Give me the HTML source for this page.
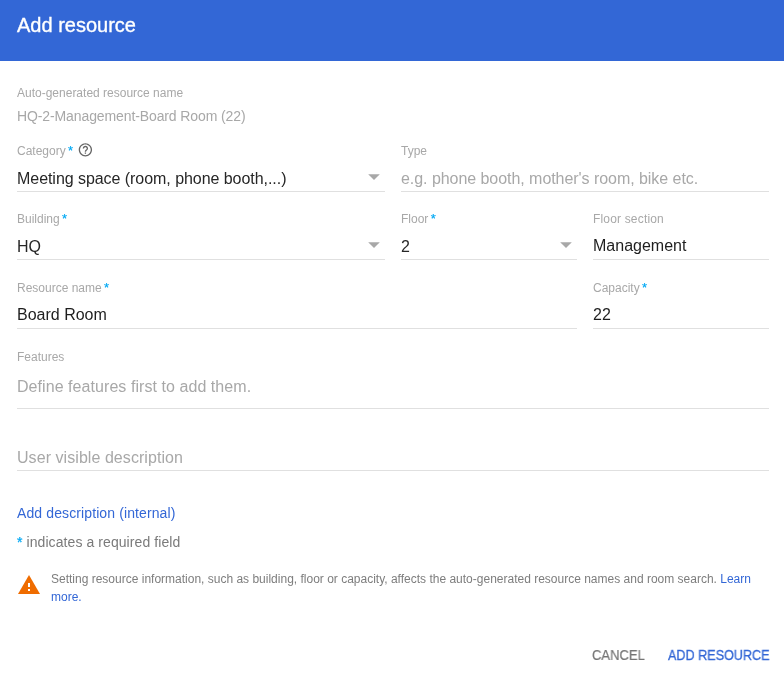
<!DOCTYPE html>
<html><head><meta charset="utf-8">
<style>
html,body{margin:0;padding:0;background:#fff;width:784px;height:677px;overflow:hidden;position:relative;font-family:"Liberation Sans",sans-serif;}
.t{position:absolute;white-space:nowrap;line-height:1;will-change:transform;}
.f12{font-size:12px;}
.f14{font-size:14px;}
.f16{font-size:16px;}
.lab{color:#a8a8a8;}
.val{color:#262626;}
.in{color:#1e1e1e;}
.ph{color:#a8a8a8;}
.req{color:#03a9f4;}
.f12 .req{font-size:13px;line-height:0;margin-left:-1px;position:relative;top:0px;-webkit-text-stroke:0.2px #03a9f4;}
.f14 .req{-webkit-text-stroke:0.25px #03a9f4;}
.ul{position:absolute;height:1px;background:#e0e0e0;}
.arr2{position:absolute;}
.arr{position:absolute;width:0;height:0;border-left:5px solid transparent;border-right:5px solid transparent;border-top:5px solid #9e9e9e;}
#hdr{position:absolute;left:0;top:0;width:784px;height:61px;background:#3367d6;}
</style></head><body>
<div id="hdr"></div>
<div class="t" id="title" style="left:17px;top:15.4px;font-size:20px;color:#fff;-webkit-text-stroke:0.35px #fff;">Add resource</div>

<div class="t f12 lab" style="left:17px;top:87px;">Auto-generated resource name</div>
<div class="t f14 lab" style="left:17px;top:109px;letter-spacing:-0.11px;">HQ-2-Management-Board Room (22)</div>

<div class="t f12 lab" style="left:17px;top:145px;">Category <span class="req">*</span></div>
<svg style="position:absolute;left:77px;top:142px;" width="17" height="16" viewBox="0 0 17 16"><g transform="translate(0.4,-0.2) scale(0.6667)"><path fill="#666" d="M11 18h2v-2h-2v2zm1-16C6.48 2 2 6.48 2 12s4.48 10 10 10 10-4.48 10-10S17.52 2 12 2zm0 18c-4.41 0-8-3.59-8-8s3.59-8 8-8 8 3.59 8 8-3.59 8-8 8zm0-14c-2.21 0-4 1.79-4 4h2c0-1.1.9-2 2-2s2 .9 2 2c0 2-3 1.75-3 5h2c0-2.25 3-2.5 3-5 0-2.21-1.79-4-4-4z"/></g></svg>
<div class="t f16 val" style="left:17px;top:171px;letter-spacing:-0.05px;">Meeting space (room, phone booth,...)</div>
<svg class="arr2" style="left:368px;top:174px;" width="13" height="8" viewBox="0 0 13 8"><path d="M0.2 0.2 L11.8 0.2 L6 6 Z" fill="#a8a8a8"/></svg>
<div class="ul" style="left:17px;top:191px;width:368px;"></div>

<div class="t f12 lab" style="left:401px;top:145px;">Type</div>
<div class="t f16 ph" style="left:401px;top:171px;letter-spacing:-0.05px;">e.g. phone booth, mother's room, bike etc.</div>
<div class="ul" style="left:401px;top:191px;width:368px;"></div>

<div class="t f12 lab" style="left:17px;top:213px;">Building <span class="req">*</span></div>
<div class="t f16 val" style="left:17px;top:239px;">HQ</div>
<svg class="arr2" style="left:368px;top:242px;" width="13" height="8" viewBox="0 0 13 8"><path d="M0.2 0.2 L11.8 0.2 L6 6 Z" fill="#a8a8a8"/></svg>
<div class="ul" style="left:17px;top:259px;width:368px;"></div>

<div class="t f12 lab" style="left:401px;top:213px;">Floor <span class="req">*</span></div>
<div class="t f16 val" style="left:401px;top:239px;">2</div>
<svg class="arr2" style="left:560px;top:242px;" width="13" height="8" viewBox="0 0 13 8"><path d="M0.2 0.2 L11.8 0.2 L6 6 Z" fill="#a8a8a8"/></svg>
<div class="ul" style="left:401px;top:259px;width:176px;"></div>

<div class="t f12 lab" style="left:593px;top:213px;letter-spacing:0.17px;">Floor section</div>
<div class="t f16 val in" style="left:593px;top:238px;">Management</div>
<div class="ul" style="left:593px;top:259px;width:176px;"></div>

<div class="t f12 lab" style="left:17px;top:282px;">Resource name <span class="req">*</span></div>
<div class="t f16 val in" style="left:17px;top:307px;">Board Room</div>
<div class="ul" style="left:17px;top:328px;width:560px;"></div>

<div class="t f12 lab" style="left:593px;top:282px;">Capacity <span class="req">*</span></div>
<div class="t f16 val in" style="left:593px;top:307px;">22</div>
<div class="ul" style="left:593px;top:328px;width:176px;"></div>

<div class="t f12 lab" style="left:17px;top:351px;">Features</div>
<div class="t f16 ph" style="left:17px;top:379px;letter-spacing:0.06px;">Define features first to add them.</div>
<div class="ul" style="left:17px;top:408px;width:752px;"></div>

<div class="t f16 ph" style="left:17px;top:450px;letter-spacing:0.06px;">User visible description</div>
<div class="ul" style="left:17px;top:470px;width:752px;"></div>

<div class="t f14" style="left:17px;top:506px;color:#3367d6;letter-spacing:0.11px;">Add description (internal)</div>
<div class="t f14" style="left:17px;top:535px;color:#7a7a7a;letter-spacing:0.08px;"><span class="req">*</span> indicates a required field</div>

<svg style="position:absolute;left:18px;top:575px;" width="22" height="19" viewBox="0 0 22 19"><path d="M11 0 L22 19 L0 19 Z" fill="#ef6c00"/><rect x="10" y="8" width="2" height="4" fill="#fff"/><rect x="10" y="14" width="2" height="2" fill="#fff"/></svg>
<div class="t f12" style="left:51px;top:573px;color:#7d7d7d;">Setting resource information, such as building, floor or capacity, affects the auto-generated resource names and room search. <span style="color:#3367d6">Learn</span></div>
<div class="t f12" style="left:51px;top:591px;color:#3367d6;">more.</div>

<div class="t f14" style="left:592px;top:648px;color:#757575;-webkit-text-stroke:0.2px #757575;transform:scaleX(0.93);transform-origin:0 0;">CANCEL</div>
<div class="t f14" style="left:668px;top:648px;color:#3367d6;-webkit-text-stroke:0.3px #3367d6;transform:scaleX(0.9);transform-origin:0 0;">ADD RESOURCE</div>
</body></html>
